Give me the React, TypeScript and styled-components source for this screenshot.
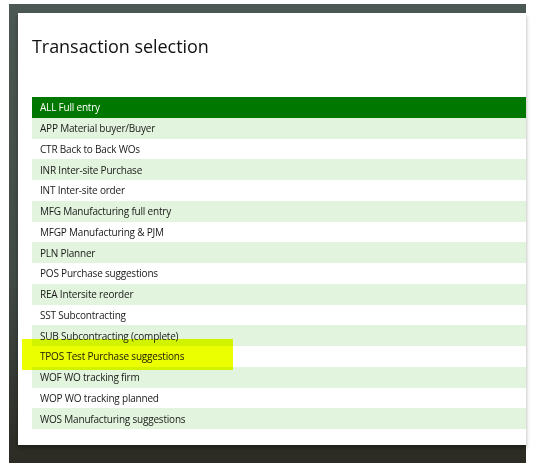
import React from "react";
import styled, { createGlobalStyle } from "styled-components";

const GlobalStyle = createGlobalStyle`
  html, body {
    margin: 0;
    padding: 0;
    background: #ffffff;
  }
  body {
    font-family: "Open Sans", "Noto Sans", sans-serif;
  }
`;

const Frame = styled.div`
  margin: 4px 0 0 9px;
  width: 517px;
  height: 459px;
  padding: 9px 0 18px 9px;
  box-sizing: border-box;
  background: linear-gradient(180deg, #4c5853 0%, #414a45 60%, #2c2b24 100%);
`;

const Panel = styled.div`
  position: relative;
  height: 100%;
  background: #ffffff;
  padding: 21px 0 0 14px;
  box-sizing: border-box;
  box-shadow: 0 3px 4px rgba(0, 0, 0, 0.35);
`;

const Title = styled.h1`
  margin: 0;
  font-weight: 400;
  font-size: 18px;
  line-height: 24px;
  color: #111111;
  letter-spacing: -0.05px;
`;

const List = styled.div`
  margin-top: 39px;
  display: flex;
  flex-direction: column;
`;

type RowProps = {
  $selected?: boolean;
  $odd?: boolean;
};

const Row = styled.div<RowProps>`
  position: relative;
  z-index: 1;
  height: 20.75px;
  display: flex;
  align-items: center;
  padding-left: 8px;
  font-size: 10px;
  letter-spacing: -0.2px;
  color: ${(p) => (p.$selected ? "#ffffff" : "#1a1a1a")};
  background: ${(p) =>
    p.$selected ? "#007800" : p.$odd ? "#e2f3de" : "#ffffff"};
  mix-blend-mode: ${(p) => (p.$selected ? "normal" : "multiply")};
`;

const Highlight = styled.div`
  position: absolute;
  left: 4px;
  top: 326px;
  width: 211px;
  height: 31px;
  background: #ecff00;
`;

const items = [
  "ALL Full entry",
  "APP Material buyer/Buyer",
  "CTR Back to Back WOs",
  "INR Inter-site Purchase",
  "INT Inter-site order",
  "MFG Manufacturing full entry",
  "MFGP Manufacturing & PJM",
  "PLN Planner",
  "POS Purchase suggestions",
  "REA Intersite reorder",
  "SST Subcontracting",
  "SUB Subcontracting (complete)",
  "TPOS Test Purchase suggestions",
  "WOF WO tracking firm",
  "WOP WO tracking planned",
  "WOS Manufacturing suggestions",
];

export default function App() {
  return (
    <>
      <GlobalStyle />
      <Frame>
        <Panel>
          <Title>Transaction selection</Title>
          <Highlight />
          <List>
            {items.map((label, i) => (
              <Row key={label} $selected={i === 0} $odd={i % 2 === 1}>
                {label}
              </Row>
            ))}
          </List>
        </Panel>
      </Frame>
    </>
  );
}
